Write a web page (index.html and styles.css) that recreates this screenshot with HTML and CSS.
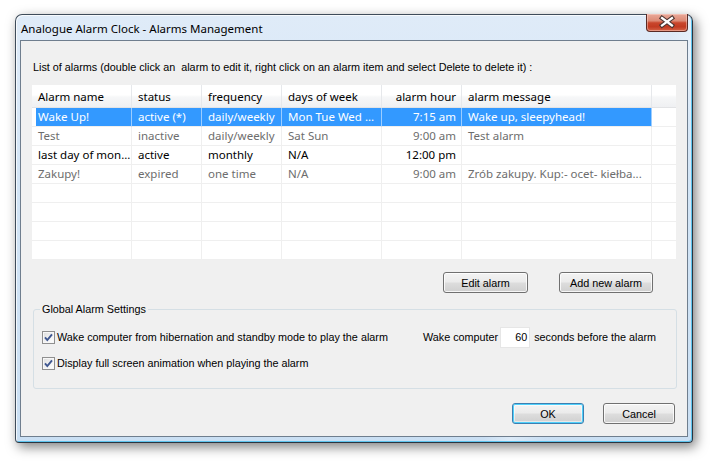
FILE: index.html
```html
<!DOCTYPE html>
<html>
<head>
<meta charset="utf-8">
<title>Alarms Management</title>
<link rel="stylesheet" href="styles.css">
</head>
<body>
<div class="window">
  <div class="titlebar">
    <span class="title">Analogue Alarm Clock - Alarms Management</span>
    <div class="close">
      <svg width="42" height="18" viewBox="0 0 42 18">
        <path d="M16 5 L26 12.5 M26 5 L16 12.5" stroke="#4a3431" stroke-width="4.4" stroke-linecap="square" fill="none"/>
        <path d="M16 5 L26 12.5 M26 5 L16 12.5" stroke="#ffffff" stroke-width="2.2" stroke-linecap="square" fill="none"/>
      </svg>
    </div>
  </div>
  <div class="client">
    <p class="intro">List of alarms (double click an&nbsp; alarm to edit it, right click on an alarm item and select Delete to delete it) :</p>
    <table class="alarms">
      <colgroup>
        <col class="c-name"><col class="c-status"><col class="c-freq"><col class="c-days"><col class="c-hour"><col class="c-msg"><col class="c-fill">
      </colgroup>
      <thead>
        <tr><th>Alarm name</th><th>status</th><th>frequency</th><th>days of week</th><th class="num">alarm hour</th><th>alarm message</th><th></th></tr>
      </thead>
      <tbody>
        <tr class="selected"><td>Wake Up!</td><td>active (*)</td><td>daily/weekly</td><td>Mon Tue Wed ...</td><td class="num">7:15 am</td><td>Wake up, sleepyhead!</td><td></td></tr>
        <tr class="muted"><td>Test</td><td>inactive</td><td>daily/weekly</td><td>Sat Sun</td><td class="num">9:00 am</td><td>Test alarm</td><td></td></tr>
        <tr><td>last day of mon...</td><td>active</td><td>monthly</td><td>N/A</td><td class="num">12:00 pm</td><td></td><td></td></tr>
        <tr class="muted"><td>Zakupy!</td><td>expired</td><td>one time</td><td>N/A</td><td class="num">9:00 am</td><td>Zrób zakupy. Kup:- ocet- kiełba...</td><td></td></tr>
        <tr><td></td><td></td><td></td><td></td><td></td><td></td><td></td></tr>
        <tr><td></td><td></td><td></td><td></td><td></td><td></td><td></td></tr>
        <tr><td></td><td></td><td></td><td></td><td></td><td></td><td></td></tr>
        <tr><td></td><td></td><td></td><td></td><td></td><td></td><td></td></tr>
      </tbody>
    </table>
    <div class="list-actions">
      <button class="btn btn-edit">Edit alarm</button>
      <button class="btn btn-add">Add new alarm</button>
    </div>
    <fieldset class="settings">
      <legend>Global Alarm Settings</legend>
      <div class="setting-row">
        <label class="check">
          <span class="box"><svg width="13" height="13" viewBox="0 0 13 13"><path d="M3 6.3 L5.3 9 L10 3.3" stroke="#3f5790" stroke-width="1.9" fill="none"/></svg></span>
          <span>Wake computer from hibernation and standby mode to play the alarm</span>
        </label>
        <div class="wake-before"><span>Wake computer</span><span class="num-input">60</span><span>seconds before the alarm</span></div>
      </div>
      <div class="setting-row short">
        <label class="check">
          <span class="box"><svg width="13" height="13" viewBox="0 0 13 13"><path d="M3 6.3 L5.3 9 L10 3.3" stroke="#3f5790" stroke-width="1.9" fill="none"/></svg></span>
          <span>Display full screen animation when playing the alarm</span>
        </label>
      </div>
    </fieldset>
    <div class="dialog-actions">
      <button class="btn btn-ok">OK</button>
      <button class="btn btn-cancel">Cancel</button>
    </div>
  </div>
</div>
</body>
</html>
```
FILE: styles.css
```css
html, body {
  margin: 0;
  background: #ffffff;
}
body {
  width: 713px;
  height: 461px;
  overflow: hidden;
  padding: 14px 0 0 15px;
  box-sizing: border-box;
}
.window {
  width: 678px;
  height: 429px;
  box-sizing: border-box;
  border: 1px solid #3f4c5a;
  border-right-color: #2b3540;
  border-bottom-color: #2b3540;
  border-radius: 7px 7px 4px 4px;
  background:
    linear-gradient(115deg, rgba(255,255,255,0) 0%, rgba(255,255,255,0) 76%, rgba(255,255,255,.35) 79%, rgba(255,255,255,0) 83%, rgba(255,255,255,0) 100%),
    linear-gradient(to bottom, #dfebf8 0%, #d3e5f6 40%, #cadff3 100%);
  box-shadow: inset 1px 1px 0 rgba(255,255,255,.75), inset -1px -1px 0 #5ec4ee, 3px 4px 12px rgba(0,0,0,.5);
  display: flex;
  flex-direction: column;
}
.titlebar {
  height: 25px;
  display: flex;
  align-items: center;
  padding-left: 5px;
  flex: none;
}
.title {
  font-family: "Noto Sans", "Open Sans", sans-serif;
  font-size: 11.5px;
  color: #000;
  padding-top: 1px;
}
.close {
  margin-left: auto;
  margin-right: 4px;
  align-self: flex-start;
  margin-top: -1px;
  width: 42px;
  height: 18px;
  box-sizing: border-box;
  border: 1px solid #5a2a24;
  border-top: none;
  border-radius: 0 0 4px 4px;
  background: linear-gradient(to bottom, #e9a999 0%, #dd8a75 40%, #c9462c 52%, #c23b22 75%, #d56447 100%);
  box-shadow: inset 0 0 0 1px rgba(255,220,210,.45);
}
.close svg { display: block; margin: -1px 0 0 -1px; }
.client {
  flex: 1;
  margin: 0 4px 5px 4px;
  border: 1px solid #6f7e8e;
  background: #f0f0f0;
  font-family: "Liberation Sans", Arial, sans-serif;
  font-size: 10.8px;
  color: #000;
}
.intro {
  margin: 20px 0 0 12px;
  line-height: 13px;
  white-space: nowrap;
}
.alarms {
  margin: 11px 0 0 11px;
  width: 644px;
  table-layout: fixed;
  border-collapse: separate;
  border-spacing: 0;
  background: #fff;
  font-family: "Noto Sans", "Open Sans", sans-serif;
  font-size: 11.5px;
}
.c-name { width: 100px; }
.c-status { width: 70px; }
.c-freq { width: 80px; }
.c-days { width: 100px; }
.c-hour { width: 80px; }
.c-msg { width: 190px; }
.c-fill { width: 24px; }
.alarms th {
  height: 23px;
  padding: 0 5px 0 6px;
  font-weight: normal;
  text-align: left;
  white-space: nowrap;
  overflow: hidden;
  border-right: 1px solid #e6e8eb;
  border-bottom: 1px solid #e2e3e5;
  background: linear-gradient(to bottom, #ffffff 0%, #ffffff 45%, #f6f7f8 55%, #eff0f2 100%);
  box-sizing: border-box;
}
.alarms td {
  height: 18px;
  padding: 0 2px 0 6px;
  white-space: nowrap;
  overflow: hidden;
  border-right: 1px solid #efefef;
  border-bottom: 1px solid #efefef;
  line-height: 18px;
}
.alarms td.num { padding-right: 5px; }
.alarms th:last-child, .alarms td:last-child { border-right: none; }
.alarms .num { text-align: right; }
.alarms tr.muted td { color: #6d6d6d; }
.alarms tr.selected td {
  background: #3399ff;
  color: #fff;
  border-right-color: #9ccdff;
}
.alarms tr.selected td:first-child {
  background: linear-gradient(to right, #fff 0, #fff 4px, #3399ff 4px);
}
.alarms tr.selected td:last-child { background: #fff; }
.list-actions {
  display: flex;
  justify-content: flex-end;
  gap: 31px;
  margin: 12px 34px 0 0;
}
.btn {
  font-family: "Liberation Sans", Arial, sans-serif;
  font-size: 10.8px;
  color: #000;
  height: 21px;
  padding: 0;
  border: 1px solid #707070;
  border-radius: 3px;
  background: linear-gradient(to bottom, #f3f3f3 0%, #ebebeb 48%, #dddddd 52%, #cfcfcf 100%);
  box-shadow: inset 0 0 0 1px rgba(255,255,255,.8);
}
.btn-edit { width: 85px; }
.btn-add { width: 94px; }
.settings {
  margin: 10px 10px 0 12px;
  padding: 10px 20px 18px 8px;
  border: 1px solid #d5dfe5;
  border-radius: 3px;
  min-width: 0;
}
.settings legend {
  padding: 0 2px;
  margin-left: -2px;
  line-height: 13px;
}
.setting-row {
  display: flex;
  align-items: center;
  height: 22px;
}
.setting-row.short { height: 14px; margin-top: 8px; }
.check {
  display: flex;
  align-items: center;
  gap: 2px;
  white-space: nowrap;
}
.box {
  width: 13px;
  height: 13px;
  box-sizing: border-box;
  border: 1px solid #8f8f8f;
  background: linear-gradient(135deg, #dcdcdc 0%, #f4f4f4 60%, #ffffff 100%);
  box-shadow: inset 0 0 0 1px #f7f7f7;
  display: block;
}
.box svg { display: block; margin: -1px 0 0 -1px; }
.wake-before {
  margin-left: auto;
  display: flex;
  align-items: center;
  white-space: nowrap;
}
.num-input {
  display: block;
  width: 30px;
  height: 21px;
  box-sizing: border-box;
  background: #fff;
  border: 1px solid #e6e6e6;
  text-align: right;
  padding-right: 2px;
  line-height: 19px;
  margin: 0 4px 0 2px;
}
.dialog-actions {
  display: flex;
  justify-content: flex-end;
  gap: 19px;
  margin: 14px 12px 0 0;
}
.btn-ok, .btn-cancel { width: 72px; }
.btn-ok {
  border-color: #3c7fb1;
  box-shadow: inset 0 0 0 1px #4fd0fb, inset 0 0 0 2px rgba(255,255,255,.5);
}
```
